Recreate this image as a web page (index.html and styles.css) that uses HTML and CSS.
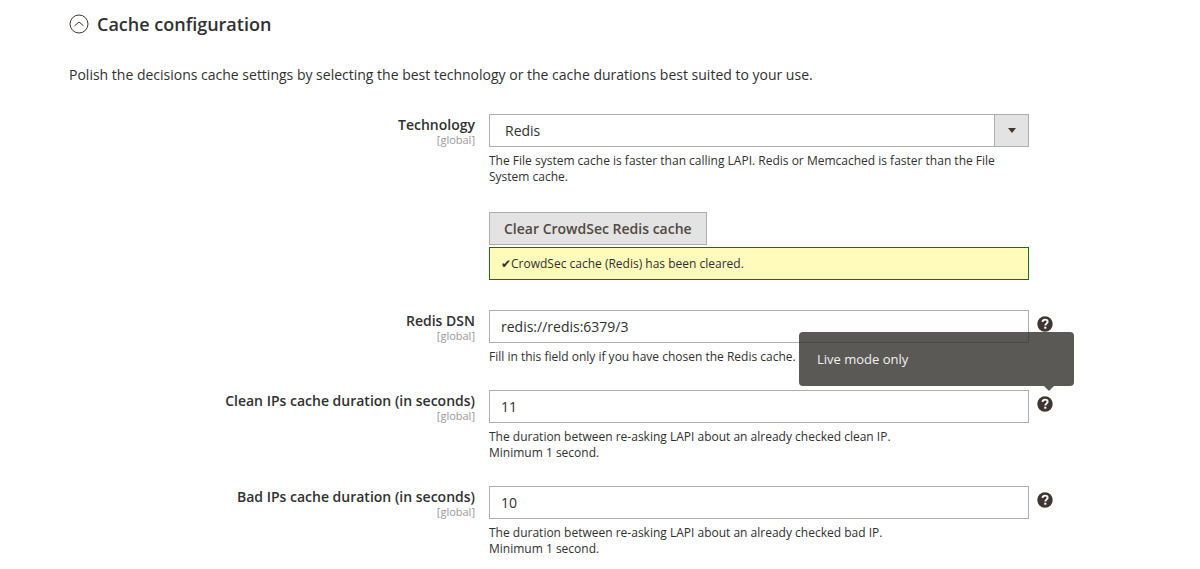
FILE: index.html
```html
<!DOCTYPE html>
<html lang="en">
<head>
<meta charset="utf-8">
<title>Cache configuration</title>
<link rel="stylesheet" href="styles.css">
</head>
<body>
<svg class="sprite" aria-hidden="true">
  <symbol id="help-icon" viewBox="0 0 17 17">
    <circle cx="8.5" cy="8.5" r="8.2" fill="#41362f"/>
    <path d="M5.8 6.3C6 4.6 7.1 3.8 8.6 3.8c1.6 0 2.7.9 2.7 2.3 0 1.900-2.500 2.100-2.500 4" fill="none" stroke="#fff" stroke-width="2"/>
    <rect x="7.700" y="11.400" width="2.200" height="2.100" fill="#fff"/>
  </symbol>
</svg>
<main class="section">
  <h2 class="section-title">
    <button class="section-toggle" type="button" aria-expanded="true">
      <svg class="toggle-icon" viewBox="0 0 20 20" aria-hidden="true"><circle cx="10" cy="10" r="9" /><path d="M5.500 11.800 10 8l4.500 3.800"/></svg>
      <span>Cache configuration</span>
    </button>
  </h2>
  <p class="intro">Polish the decisions cache settings by selecting the best technology or the cache durations best suited to your use.</p>

  <form class="fields">
    <div class="row">
      <label class="label" for="technology">Technology<span class="scope">[global]</span></label>
      <div class="value">
        <div class="select">
          <select class="control" id="technology"><option>Redis</option><option>File system</option><option>Memcached</option></select>
          <span class="select-arrow" aria-hidden="true"></span>
        </div>
        <p class="note">The File system cache is faster than calling LAPI. Redis or Memcached is faster than the File System cache.</p>
      </div>
    </div>

    <div class="row row-action">
      <div class="value">
        <button class="button" type="button">Clear CrowdSec Redis cache</button>
        <div class="message" role="status">✔CrowdSec cache (Redis) has been cleared.</div>
      </div>
    </div>

    <div class="row">
      <label class="label" for="dsn">Redis DSN<span class="scope">[global]</span></label>
      <div class="value">
        <input class="control" id="dsn" type="text" value="redis://redis:6379/3">
        <p class="note">Fill in this field only if you have chosen the Redis cache.</p>
      </div>
      <div class="help"><svg class="help-icon" role="img" aria-label="Help"><use href="#help-icon"/></svg></div>
    </div>

    <div class="row">
      <label class="label" for="clean">Clean IPs cache duration (in seconds)<span class="scope">[global]</span></label>
      <div class="value">
        <input class="control" id="clean" type="text" value="11" aria-describedby="clean-tip">
        <p class="note">The duration between re-asking LAPI about an already checked clean IP.<br>Minimum 1 second.</p>
      </div>
      <div class="help"><svg class="help-icon" role="img" aria-label="Help"><use href="#help-icon"/></svg>
        <div class="tooltip" id="clean-tip" role="tooltip">Live mode only</div>
      </div>
    </div>

    <div class="row">
      <label class="label" for="bad">Bad IPs cache duration (in seconds)<span class="scope">[global]</span></label>
      <div class="value">
        <input class="control" id="bad" type="text" value="10">
        <p class="note">The duration between re-asking LAPI about an already checked bad IP.<br>Minimum 1 second.</p>
      </div>
      <div class="help"><svg class="help-icon" role="img" aria-label="Help"><use href="#help-icon"/></svg></div>
    </div>
  </form>
</main>
</body>
</html>
```
FILE: styles.css
```css
* {
  box-sizing: border-box;
}

body {
  margin: 0;
  background: #fff;
  color: #303030;
  font: 14px/20px "Open Sans", "Noto Sans", sans-serif;
}

.sprite {
  display: none;
}

.section {
  padding: 12px 69px 0;
}

.section-title {
  margin: 0;
  font-size: 18px;
  line-height: 24px;
}

.section-toggle {
  display: flex;
  align-items: center;
  gap: 8px;
  padding: 0;
  border: 0;
  background: none;
  color: inherit;
  font: inherit;
  font-weight: 600;
}

.toggle-icon {
  width: 20px;
  height: 20px;
  fill: none;
  stroke: #41362f;
}

.intro {
  margin: 29px 0 29px;
}

.fields {
  display: grid;
  gap: 25px;
}

.row {
  display: grid;
  grid-template-columns: minmax(0, 70fr) minmax(0, 90fr) minmax(0, 17fr);
  align-items: start;
}

.row-action {
  padding: 2px 0 5px;
}

.value {
  grid-column: 2;
}

.label {
  padding: 1px 14px 0 0;
  font-weight: 600;
  text-align: right;
}

.scope {
  display: block;
  color: #999;
  font-size: 11px;
  font-weight: 400;
  line-height: 10px;
}

.control {
  display: block;
  width: 100%;
  height: 33px;
  padding: 0 11px;
  border: 1px solid #adadad;
  border-radius: 0;
  background: #fff;
  color: #303030;
  font: inherit;
  appearance: none;
}

.select {
  display: grid;
}

.select > * {
  grid-area: 1 / 1;
}

.select .control {
  padding: 0 48px 0 15px;
}

.select-arrow {
  display: grid;
  place-items: center;
  justify-self: end;
  width: 35px;
  border: 1px solid #adadad;
  background: #e3e3e3;
  pointer-events: none;
}

.select-arrow::before {
  content: "";
  border: 4px solid transparent;
  border-top: 5px solid #41362f;
  border-bottom: 0;
}

.note {
  margin: 6px 0 0;
  font-size: 12px;
  line-height: 16px;
}

.button {
  display: block;
  height: 33px;
  padding: 0 14px;
  border: 1px solid #adadad;
  background: #e3e3e3;
  color: #514943;
  font: inherit;
  font-weight: 600;
}

.message {
  margin-top: 2px;
  padding: 7px 11px;
  border: 1px solid #1a6b1a;
  background: #fffbbb;
  font-size: 12px;
  line-height: 17px;
}

.help {
  position: relative;
  justify-self: start;
  margin: 6px 0 0 8px;
}

.help-icon {
  display: block;
  width: 16px;
  height: 16px;
}

.tooltip {
  position: absolute;
  right: -21px;
  bottom: calc(100% + 10px);
  width: 275px;
  padding: 17px 18px;
  border-radius: 4px;
  background: rgba(49, 48, 43, 0.8);
  color: #f1f1f1;
  font-size: 13px;
}

.tooltip::after {
  content: "";
  position: absolute;
  top: 100%;
  right: 20px;
  border: 5px solid transparent;
  border-top-color: rgba(49, 48, 43, 0.8);
  border-bottom: 0;
}
```
